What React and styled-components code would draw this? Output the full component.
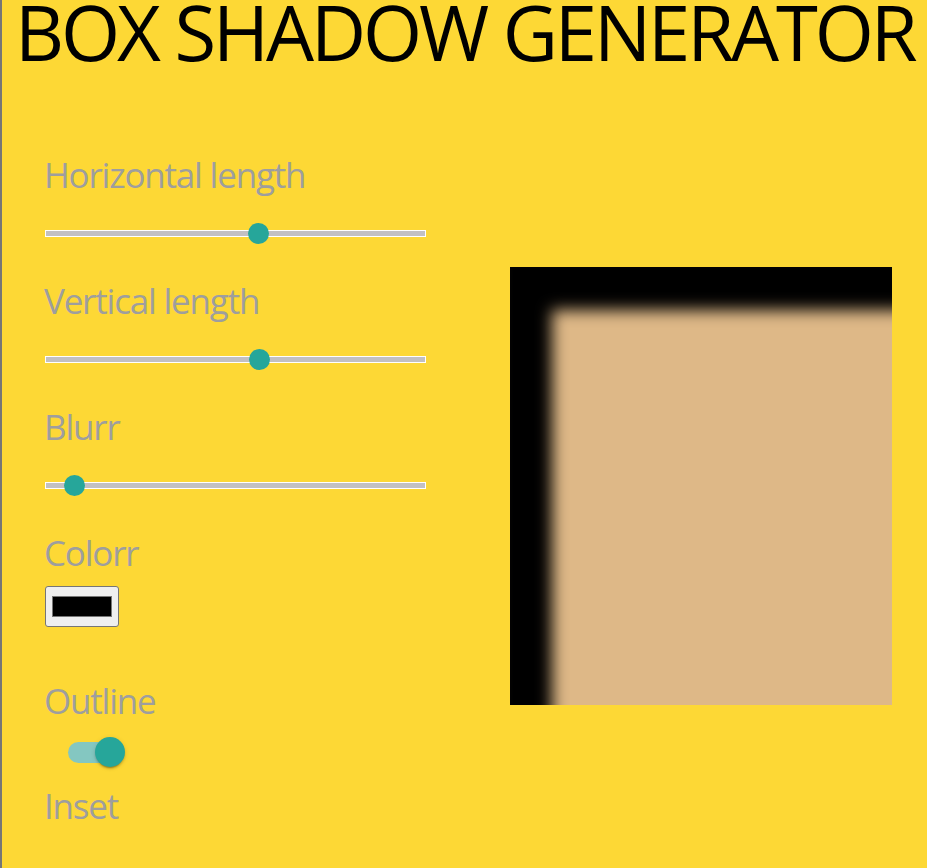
import React, { useState } from "react";
import styled, { createGlobalStyle } from "styled-components";

const GlobalStyle = createGlobalStyle`
  html, body {
    margin: 0;
    padding: 0;
    background: #fdd835;
  }
  body {
    font-family: "Open Sans", "Noto Sans", sans-serif;
  }
`;

const Page = styled.div`
  min-height: 868px;
  border-left: 2px solid #767676;
  box-sizing: border-box;
  background: #fdd835;
`;

const Title = styled.h1`
  width: max-content;
  margin: 0 0 0 13px;
  font-size: 76px;
  line-height: 64px;
  font-weight: 400;
  color: #000;
  white-space: nowrap;
  letter-spacing: -3.1px;
`;

const Main = styled.div`
  display: flex;
  align-items: flex-start;
  padding: 91px 0 0 42px;
  gap: 85px;
`;

const Controls = styled.div`
  display: flex;
  flex-direction: column;
  width: 381px;
`;

const Label = styled.div`
  font-size: 35px;
  line-height: 40px;
  height: 40px;
  color: #9e9e9e;
  white-space: nowrap;
  letter-spacing: -1.2px;
`;

const Group = styled.div`
  display: flex;
  flex-direction: column;
  margin-bottom: ${(p) => p.$gap || 0}px;
`;

const Range = styled.input.attrs({ type: "range" })`
  -webkit-appearance: none;
  appearance: none;
  width: 381px;
  height: 21px;
  margin: 28px 0 37px 1px;
  padding: 0;
  background: transparent;
  outline: none;

  &::-webkit-slider-runnable-track {
    height: 7px;
    box-sizing: border-box;
    background: #c2c0c2;
    border: 1px solid #fff;
  }
  &::-webkit-slider-thumb {
    -webkit-appearance: none;
    width: 21px;
    height: 21px;
    border-radius: 50%;
    border: none;
    background: #26a69a;
    margin-top: -8px;
  }
`;

const ColorInput = styled.input.attrs({ type: "color" })`
  -webkit-appearance: none;
  appearance: none;
  width: 74px;
  height: 41px;
  margin: 13px 0 0 1px;
  padding: 0;
  box-sizing: border-box;
  background: #efefef;
  border: 1px solid #767676;
  border-radius: 3px;
  cursor: pointer;

  &::-webkit-color-swatch-wrapper {
    padding: 9px 6px;
  }
  &::-webkit-color-swatch {
    border: 1px solid #777;
    border-radius: 0;
  }
`;

const SwitchRow = styled.label`
  display: flex;
  align-items: center;
  height: 30px;
  margin: 16px 0 19px;
  cursor: pointer;

  input {
    display: none;
  }
`;

const Lever = styled.span`
  position: relative;
  display: inline-block;
  width: 52px;
  height: 21px;
  margin-left: 24px;
  border-radius: 11px;
  background: ${(p) => (p.$on ? "#84c7c1" : "rgba(0,0,0,0.38)")};

  &::after {
    content: "";
    position: absolute;
    top: -4.5px;
    left: ${(p) => (p.$on ? "27px" : "-4px")};
    width: 30px;
    height: 30px;
    border-radius: 50%;
    background: ${(p) => (p.$on ? "#26a69a" : "#f1f1f1")};
    box-shadow: 0 3px 1px -2px rgba(0, 0, 0, 0.2), 0 2px 2px 0 rgba(0, 0, 0, 0.14),
      0 1px 5px 0 rgba(0, 0, 0, 0.12);
  }
`;

const Preview = styled.div`
  margin-top: 112px;
  width: 382px;
  height: 438px;
  background: #deb887;
  box-shadow: ${(p) => p.$shadow};
`;

export default function App() {
  const [h, setH] = useState(56.5);
  const [v, setV] = useState(56.8);
  const [blur, setBlur] = useState(4.9);
  const [color, setColor] = useState("#000000");
  const [outline, setOutline] = useState(true);

  const shadow = `${outline ? "inset " : ""}${Math.round(h * 0.74)}px ${Math.round(
    v * 0.76
  )}px ${Math.round(blur * 3)}px ${color}`;

  return (
    <Page>
      <GlobalStyle />
      <Title>BOX SHADOW GENERATOR</Title>
      <Main>
        <Controls>
          <Group>
            <Label>Horizontal length</Label>
            <Range min="0" max="100" step="any" value={h} onChange={(e) => setH(+e.target.value)} />
          </Group>
          <Group>
            <Label>Vertical length</Label>
            <Range min="0" max="100" step="any" value={v} onChange={(e) => setV(+e.target.value)} />
          </Group>
          <Group>
            <Label>Blurr</Label>
            <Range min="0" max="100" step="any" value={blur} onChange={(e) => setBlur(+e.target.value)} />
          </Group>
          <Group $gap={54}>
            <Label>Colorr</Label>
            <ColorInput value={color} onChange={(e) => setColor(e.target.value)} />
          </Group>
          <Group>
            <Label>Outline</Label>
            <SwitchRow>
              <input type="checkbox" checked={outline} onChange={(e) => setOutline(e.target.checked)} />
              <Lever $on={outline} />
            </SwitchRow>
            <Label>Inset</Label>
          </Group>
        </Controls>
        <Preview $shadow={shadow} />
      </Main>
    </Page>
  );
}
